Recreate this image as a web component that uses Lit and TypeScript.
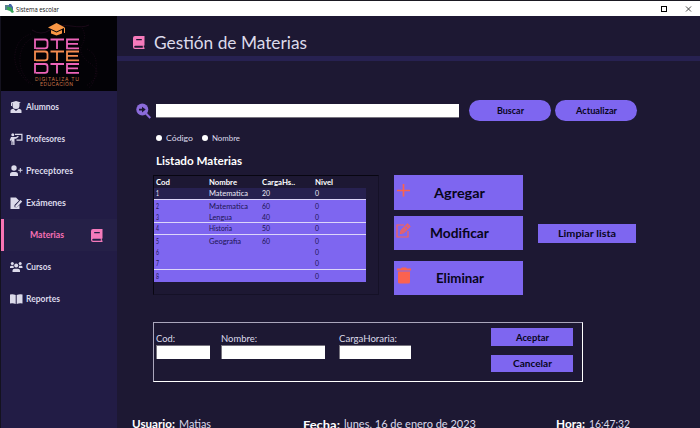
import { LitElement, html, svg, css } from "lit";
import { customElement } from "lit/decorators.js";
import { classMap } from "lit/directives/class-map.js";

// Single-line text fitted to a given width, capitals centred vertically.
const label = (text: string, width: number, size: number, cls = "") => {
  const h = Math.round(size * 1.2);
  return html`<svg class="label ${cls}" width=${width} height=${h} font-size=${size}>
    <text x="0" y=${h / 2 + size * 0.36} textLength=${width} lengthAdjust="spacingAndGlyphs">${text}</text>
  </svg>`;
};

const glyphs: Record<string, unknown> = {
  alumno: svg`<path d="M1 1.5 6 0l5 1.5L9.500 2v2.500a3.500 3.500 0 0 1-7 0V2L2 2.200V5H1z M.5 12V10Q.5 8 3.500 7.800L6 10l2.500-2.200Q11.500 8 11.500 10v2z"/>`,
  profesor: svg`<circle cx="2.800" cy="1.800" r="1.500"/><path d="M1 4h5l2-1.200.8 1L6 5.800H4.500V12H3.200V8.500h-.6V12H1.400V6.500L.5 8-.3 7.300z M5 .8h7.500v7H6.500V6.500h4.800V2H5z"/>`,
  preceptor: svg`<circle cx="4" cy="3" r="2.700"/><path d="M0 11V9.500Q0 7 2.500 7h3Q8 7 8 9.500V11z M9.800 3h1v1.700h1.700v1h-1.700v1.700h-1V5.700H8.200v-1h1.600z"/>`,
  examen: svg`<path d="M.5.5H6L9 3.500 4.500 8v2.300H7L9.500 8v4h-9z"/><path d="m5.500 8.500 5-5.500 1.700 1.500-5 5.500-2 .3z"/>`,
  curso: svg`<circle cx="2.300" cy="2.500" r="1.500"/><circle cx="10.200" cy="2.500" r="1.500"/><circle cx="6.200" cy="4.500" r="2"/><path d="M0 7V6Q0 4.700 1.500 4.700h2L3.800 7z M12.500 7V6Q12.500 4.700 11 4.700H9L8.700 7z M2.500 11V9.500Q2.500 7.700 4.500 7.700H8Q10 7.700 10 9.500V11z"/>`,
  reporte: svg`<path d="M0 1.500Q3 .8 5.700 2v9Q3 9.800 0 10.500z M6.700 2Q9.500.8 12.500 1.500v9Q9.500 9.800 6.700 11z"/>`,
};

const book = (size: number) => html`<svg class="pink" width=${size} height=${size + 1} viewBox="0 0 12 13">
  <path fill-rule="evenodd" d="M2 0h9.500v9.600h-.7v2h.7V13H2Q0 13 0 11V2Q0 0 2 0z M3.200 3v1.200h5.600V3z M2.200 9.800Q1.200 9.800 1.200 10.800T2.200 11.700h7.600V9.800z"/>
</svg>`;

const menu: [string, string, number][] = [
  ["alumno", "Alumnos", 33],
  ["profesor", "Profesores", 39],
  ["preceptor", "Preceptores", 47],
  ["examen", "Exámenes", 40],
  ["", "Materias", 34],
  ["curso", "Cursos", 25],
  ["reporte", "Reportes", 34],
];

// Code, name, name width, hours, level.
const rows: [string, string, number, string, string][] = [
  ["1", "Matematica", 39, "20", "0"],
  ["2", "Matematica", 39, "60", "0"],
  ["3", "Lengua", 23, "40", "0"],
  ["4", "Historia", 23, "50", "0"],
  ["5", "Geografia", 32, "60", "0"],
  ["6", "", 0, "", "0"],
  ["7", "", 0, "", "0"],
  ["8", "", 0, "", "0"],
];
const ruled = new Set(["1", "3", "4", "7"]);

@customElement("app-root")
export class AppRoot extends LitElement {
  static styles = css`
    :host {
      display: flex; flex-direction: column; width: 700px; height: 428px; overflow: hidden;
      background: #1d1833; color: #dcdaea; box-sizing: border-box;
      font-family: "Century Gothic", Lato, sans-serif;
    }
    * { box-sizing: border-box; }
    svg { display: block; overflow: visible; fill: currentColor; flex: none; }
    .bold { font-weight: 700; }
    .pink { color: #f57abb; }
    .white { color: #fff; }
    .titlebar { height: 16px; flex: none; border-top: 1px solid #1a1922; background: #fff; color: #111;
      display: flex; align-items: center; padding: 0 9px 0 5px; gap: 2px; }
    .titlebar .label { font-family: "Open Sans", sans-serif; }
    .controls { margin-left: auto; display: flex; gap: 19px; }
    .body { flex: 1; min-height: 0; display: flex; }
    .side { width: 117px; flex: none; background: #221c45; border-left: 1px solid #14121f; }
    .logo { height: 75px; background: #030206; }
    .item { height: 32px; display: flex; align-items: center; padding-left: 9px; gap: 3px; }
    .item.active { background: #252047; border-left: 3px solid #f875b4; padding: 0 14px 0 26px; justify-content: space-between; color: #f570b5; }
    .main { flex: 1; min-width: 0; }
    .head { height: 45px; border-bottom: 5px solid #272151; display: flex; align-items: center; padding: 13px 0 0 16px; gap: 9px; }
    .search { display: flex; align-items: center; margin: 39px 0 0 19px; height: 21px; }
    .field { background: #fff; border: 1px solid #77747f; border-width: 1px 0 0 1px; height: 14px; }
    .query { width: 303px; margin: 0 10px 0 5px; border-width: 0 0 1px; }
    .btn { background: #7e66f0; color: #07051a; display: flex; align-items: center; justify-content: center; }
    .pill { width: 82px; height: 21px; border-radius: 11px; margin-right: 4px; }
    .radios { display: flex; align-items: center; height: 10px; margin: 12px 0 0 39px; }
    .dot { width: 6px; height: 6px; border-radius: 50%; background: #fff; margin-right: 4px; }
    .dot.second { margin-left: 9px; }
    .heading { margin: 12px 0 0 39px; height: 13px; }
    .work { display: flex; margin: 7px 0 0 36px; height: 120px; }
    .table { width: 226px; border: 1px solid #080611; border-right-color: #151127; border-bottom-color: #151127; }
    .row { display: grid; grid-template-columns: 53px 53px 53px 51px; align-items: center; width: 212px; height: 11.700px;
      padding-left: 2px; background: #7e66f0; color: #1c1550; }
    .row.top { background: none; color: #fff; height: 12px; }
    .row.selected { background: #272150; color: #eeecf8; }
    .row.ruled { border-bottom: 1px solid #dcd6fa; }
    .actions { margin-left: 15px; display: grid; grid-template-rows: 35px 34px 34px; row-gap: 6px; width: 129px; }
    .actions .btn { display: grid; grid-template-columns: 15px 1fr; padding-left: 2px; justify-items: center; }
    .actions .btn svg:last-child { margin-right: 15px; }
    .actions .remove { margin-top: 5px; height: 34px; }
    .tool { color: #fb624f; margin-bottom: 5px; }
    .clear { width: 98px; height: 19px; margin: 49px 0 0 15px; }
    .form { width: 430px; height: 60px; margin: 27px 0 0 36px; border: 1px solid #fff; border-top-color: #aaa6bc; border-left-color: #aaa6bc;
      display: flex; padding: 0 9px 0 2px; }
    .group { padding-top: 9px; display: grid; grid-template-rows: 13px 14px; align-content: start; align-items: center; }
    .confirm { margin-left: auto; padding-top: 5px; display: grid; row-gap: 9px; grid-template-rows: 18px 17px; grid-template-columns: 82px; }
    .status { display: flex; margin: 36px 0 0 15px; gap: 4px; }
    .status .date { margin: 1px 0 0 88px; }
    .status .hour { margin-left: 76px; }
  `;

  render() {
    return html`
      <div class="titlebar">
        <svg width="9" height="9" viewBox="0 0 9 9"><path fill="#55838e" d="M0 1h5v5H0z"/><path fill="#4466a6" d="M4 0h2l2 3v3H4z"/><path fill="#38a45a" d="M2 3h4l3 5-2 1-2-2-3-1z"/></svg>
        ${label("Sistema escolar", 43, 7)}
        <div class="controls">
          <svg width="6" height="6"><rect x=".5" y=".5" width="5" height="5" fill="none" stroke="#000"/></svg>
          <svg width="5" height="6"><path d="M0 .5l5 5M5 .5l-5 5" stroke="#333" stroke-width=".9"/></svg>
        </div>
      </div>
      <div class="body">
        <div class="side">
          <svg class="logo" width="116" height="75" viewBox="0 0 116 75">
            <g fill="none" stroke="#39132f" stroke-width=".6" stroke-dasharray="1 1.500" opacity=".75">
              <path d="M30 18Q16 22 14 38T29 68M34 21Q20 26 19 42T32 69M81 12Q86 20 81 29T90 48T85 70M86 33Q97 38 95 54T87 72"/>
              <path d="M31 14Q40 20 49 14T70 10T88 9" stroke-dasharray="none"/>
            </g>
            <path fill="#f99745" d="M47 11.500 55.500 7l8.500 4.500-8.500 4z M50 14l5.500 2.500L61 14v3.500l-5.500 2-5.500-2z M63 12h1v5h-1z"/>
            <g fill="none" stroke-width="1.800">
              ${[["#ed64b9", 23.500], ["#f58c50", 35.500], ["#ed64b9", 48]].map(([c, y]) => svg`<g stroke=${c} transform="translate(34 ${y})">
                <path d="M0 9.500V0H10Q12.500 0 12.500 2.500V6.500Q12.500 8.800 10 8.800H1M15.500 0H29M22 0V9.600M44 0H32V8.800H44M32 4.400H43"/></g>`)}
            </g>
            <g fill="#c97447" font-size="5" font-family="Inter, sans-serif">
              <text x="34" y="65" textLength="44">DIGITALIZA TU</text>
              <text x="39" y="69.500" textLength="33">EDUCACIÓN</text>
            </g>
          </svg>
          ${menu.map(([icon, text, w]) => html`
            <div class=${classMap({ item: true, active: !icon })}>
              ${icon ? html`<svg width="13" height="12" viewBox="0 0 13 12">${glyphs[icon]}</svg>` : ""}
              ${label(text, w, 8.7, "bold")}
              ${icon ? "" : book(12)}
            </div>`)}
        </div>
        <div class="main">
          <div class="head">${book(12)}${label("Gestión de Materias", 153, 17)}</div>
          <div class="search">
            <svg width="15" height="16" viewBox="0 0 15 16"><circle cx="6.300" cy="6.500" r="6" fill="#8b6bdb"/><path d="m10 10.500 4.300 4.500" stroke="#8b6bdb" stroke-width="2"/><path d="M3 5.700h3V3.700l3.700 2.900L6 9.500v-2H3z" fill="#1d1833"/></svg>
            <div class="field query"></div>
            <div class="btn pill">${label("Buscar", 27, 9.3, "bold")}</div>
            <div class="btn pill">${label("Actualizar", 41, 9.3, "bold")}</div>
          </div>
          <div class="radios">
            <span class="dot"></span>${label("Código", 27, 7.5)}
            <span class="dot second"></span>${label("Nombre", 28, 7.5)}
          </div>
          <div class="heading">${label("Listado Materias", 86, 11, "bold white")}</div>
          <div class="work">
            <div class="table">
              <div class="row top">
                ${label("Cod", 14, 7.3, "bold")}${label("Nombre", 28, 7.3, "bold")}${label("CargaHs..", 33, 7.3, "bold")}${label("Nivel", 18, 7.3, "bold")}
              </div>
              ${rows.map(([id, name, w, hours, level]) => html`
                <div class=${classMap({ row: true, selected: id === "1", ruled: ruled.has(id) })}>
                  ${label(id, 3, 7)}${name ? label(name, w, 7) : html`<i></i>`}${hours ? label(hours, 8, 7) : html`<i></i>`}${label(level, 4, 7)}
                </div>`)}
            </div>
            <div class="actions">
              <div class="btn">
                <svg class="tool" width="13" height="13"><path d="M6.500 0v12.500M0 6.500h13" stroke="currentColor" stroke-width="1.700"/></svg>
                ${label("Agregar", 51, 13, "bold")}
              </div>
              <div class="btn">
                <svg class="tool" width="15" height="15" viewBox="0 0 15 15"><path d="M8 2H1v12h11V8M4.500 10.500l.7-3L11.500 1.200l2.300 2.300-6.300 6.300zM10 2.700 12.300 5M6 9l4-4" fill="none" stroke="currentColor" stroke-width="1.200"/></svg>
                ${label("Modificar", 59, 13, "bold")}
              </div>
              <div class="btn remove">
                <svg class="tool" width="14" height="17" viewBox="0 0 14 17"><path d="M0 1.500h4L5 .5h4l1 1h4v2H0z M1 4.500h12V15q0 1.500-1.500 1.500h-9Q1 16.500 1 15z"/></svg>
                ${label("Eliminar", 48, 13, "bold")}
              </div>
            </div>
            <div class="btn clear">${label("Limpiar lista", 58, 9.5, "bold")}</div>
          </div>
          <div class="form">
            <div class="group" style="width:65px">${label("Cod:", 19, 8.5)}<div class="field" style="width:54px"></div></div>
            <div class="group" style="width:118px">${label("Nombre:", 36, 8.5)}<div class="field" style="width:104px"></div></div>
            <div class="group">${label("CargaHoraria:", 58, 8.5)}<div class="field" style="width:72px"></div></div>
            <div class="confirm">
              <div class="btn">${label("Aceptar", 33, 9, "bold")}</div>
              <div class="btn">${label("Cancelar", 39, 9, "bold")}</div>
            </div>
          </div>
          <div class="status">
            ${label("Usuario:", 43, 11, "bold white")}${label("Matias", 32, 11)}
            ${label("Fecha:", 37, 11, "bold white date")}${label("lunes, 16 de enero de 2023", 132, 11, "")}
            ${label("Hora:", 29, 11, "bold white hour")}${label("16:47:32", 41, 11)}
          </div>
        </div>
      </div>`;
  }
}
